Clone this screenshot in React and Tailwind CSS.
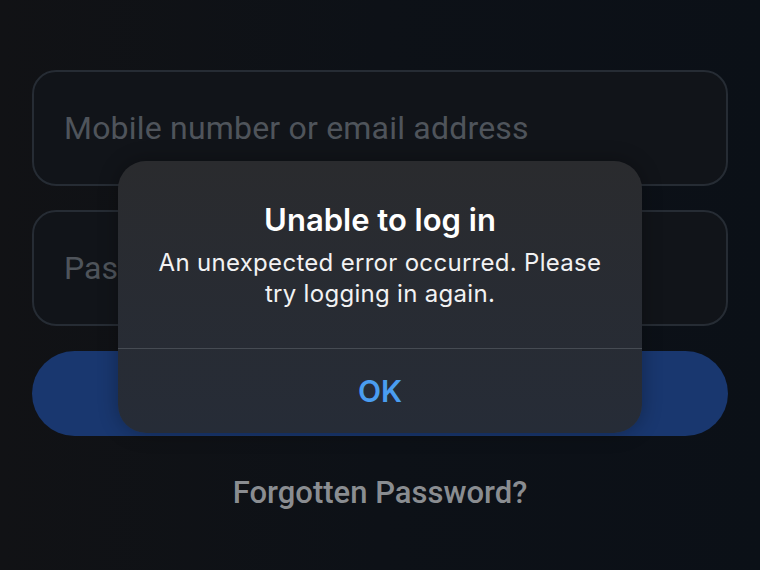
import React from 'react';

export default function App() {
  return (
    <div className="relative w-[760px] h-[570px] overflow-hidden bg-gradient-to-r from-[#111215] via-[#0d1117] to-[#0b1017] font-['Roboto',sans-serif]">
      {/* Login form behind the alert */}
      <div className="flex flex-col px-[32px] pt-[70px]">
        <div className="h-[116px] flex items-center pl-[30px] rounded-[24px] border-2 border-[#262c34] bg-[#111419]">
          <span className="text-[32px] text-[#4f545b] tracking-[0.2px]">Mobile number or email address</span>
        </div>
        <div className="mt-[24px] h-[116px] flex items-center pl-[30px] rounded-[24px] border-2 border-[#262c34] bg-[#111419]">
          <span className="text-[32px] text-[#4f545b]">Password</span>
        </div>
        <div className="mt-[25px] h-[85px] rounded-full bg-[#19376f]" />
        <div className="mt-[34px] text-center text-[31px] font-medium text-[#8a8d91]">Forgotten Password?</div>
      </div>

      {/* Alert */}
      <div className="absolute left-[118px] top-[161px] w-[524px] h-[272px] rounded-[28px] overflow-hidden flex flex-col bg-gradient-to-b from-[#2a2b2e] to-[#262c37] font-['Inter',sans-serif] shadow-[0_0_20px_rgba(0,0,0,0.3)]">
        <div className="h-[187px] flex flex-col items-center pt-[39px] text-center">
          <h1 className="text-[31px] leading-[40px] font-semibold text-white">Unable to log in</h1>
          <p className="mt-[7px] w-[470px] text-[24px] leading-[31px] tracking-[0.3px] text-[#f2f2f3]">
            An unexpected error occurred. Please try logging in again.
          </p>
        </div>
        <div className="h-px bg-[#464b53]" />
        <button className="flex-1 flex items-center justify-center text-[30px] font-semibold text-[#4a9df0] bg-transparent">
          OK
        </button>
      </div>
    </div>
  );
}
